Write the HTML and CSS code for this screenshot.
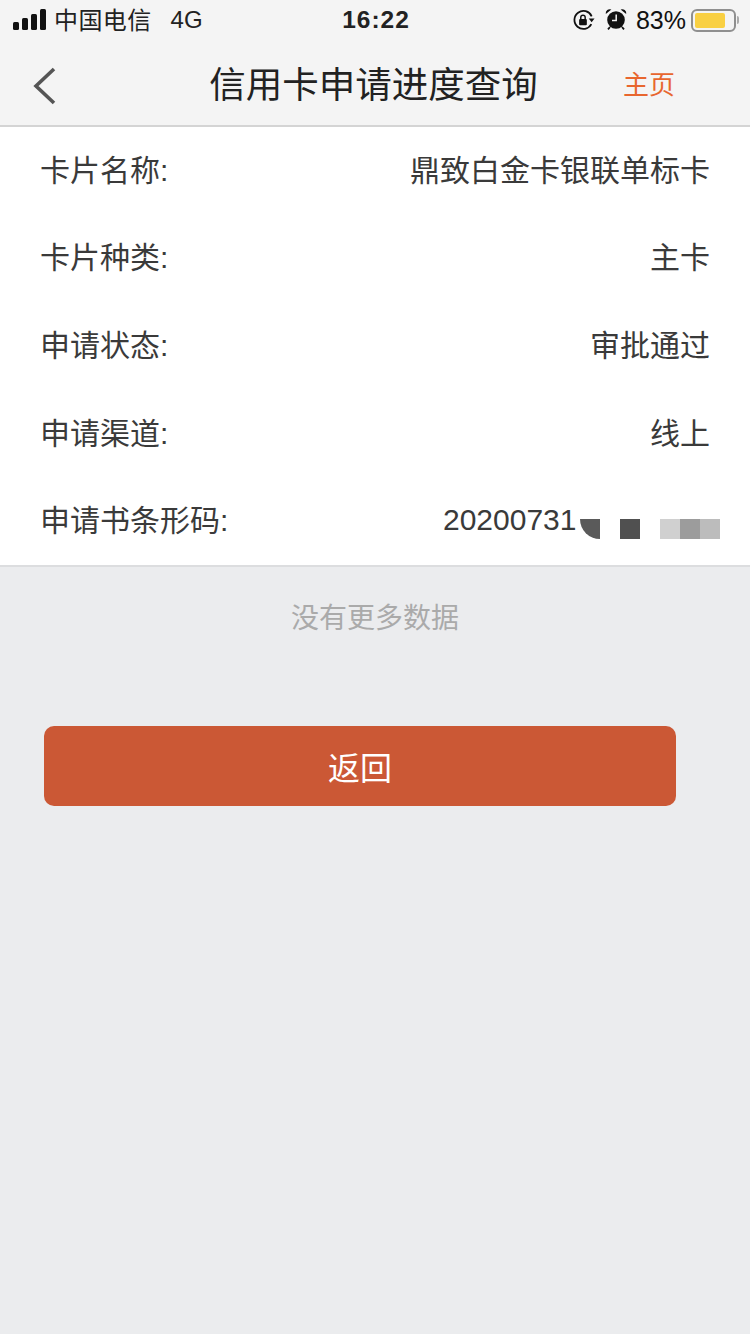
FILE: index.html
```html
<!DOCTYPE html>
<html lang="zh-CN">
<head>
  <meta charset="UTF-8">
  <title>信用卡申请进度查询</title>
  <link rel="stylesheet" href="styles.css">
</head>
<body>
  <div class="statusbar">
    <div class="status-left">
      <svg class="signal" width="34" height="22" viewBox="0 0 34 22">
        <rect x="0" y="13" width="6" height="8" rx="1.5"/>
        <rect x="9" y="9" width="6" height="12" rx="1.5"/>
        <rect x="18" y="5" width="6" height="16" rx="1.5"/>
        <rect x="27" y="0" width="6" height="21" rx="1.5"/>
      </svg>
      <span class="carrier">中国电信</span>
      <span class="network">4G</span>
    </div>
    <div class="clock">16:22</div>
    <div class="status-right">
      <!-- rotation lock -->
      <svg class="ico-lock" width="23" height="23" viewBox="0 0 22 22">
        <path d="M18.5 14.5A8.6 8.6 0 1 1 18.8 7" fill="none" stroke="#111" stroke-width="1.7"/>
        <path d="M16 9.2h5.6l-2.8 3.4z" fill="#111"/>
        <rect x="6.8" y="9.6" width="7.4" height="6" rx="1" fill="#111"/>
        <path d="M8.4 9.8V8a2.1 2.1 0 0 1 4.2 0v1.8" fill="none" stroke="#111" stroke-width="1.4"/>
      </svg>
      <!-- alarm clock -->
      <svg class="ico-alarm" width="22" height="24" viewBox="0 0 22 24">
        <circle cx="11" cy="13" r="8.8" fill="#111"/>
        <path d="M0.8 7a4 4 0 0 1 5.6-4.4zM21.2 7a4 4 0 0 0-5.6-4.4z" fill="#111"/>
        <path d="M5 20l-2 2.4M17 20l2 2.4" stroke="#111" stroke-width="1.8"/>
        <path d="M11.2 7.5v6H7" fill="none" stroke="#f3f3f3" stroke-width="1.5"/>
      </svg>
      <span class="percent">83%</span>
      <div class="battery">
        <div class="battery-level"></div>
      </div>
      <div class="battery-cap"></div>
    </div>
  </div>

  <div class="navbar">
    <svg class="back" width="26" height="40" viewBox="0 0 26 40">
      <path d="M23 3L5 20l18 17" fill="none" stroke="#555" stroke-width="3.6"/>
    </svg>
    <h1 class="title">信用卡申请进度查询</h1>
    <a class="home">主页</a>
  </div>

  <div class="list">
    <div class="row"><span>卡片名称:</span><span>鼎致白金卡银联单标卡</span></div>
    <div class="row"><span>卡片种类:</span><span>主卡</span></div>
    <div class="row"><span>申请状态:</span><span>审批通过</span></div>
    <div class="row"><span>申请渠道:</span><span>线上</span></div>
    <div class="row">
      <span>申请书条形码:</span>
      <span class="barcode">20200731
        <span class="mosaic">
          <i class="m-round"></i>
          <i class="m-dark"></i>
          <i class="m-light"></i>
          <i class="m-mid"></i>
          <i class="m-soft"></i>
        </span>
      </span>
    </div>
  </div>

  <p class="no-more">没有更多数据</p>

  <button class="back-btn">返回</button>
</body>
</html>
```

FILE: styles.css
```css
* {
  box-sizing: border-box;
}

html, body {
  height: 100%;
}

body {
  margin: 0;
  background: #ebecee;
  color: #333;
  font-family: "Liberation Sans", "Noto Sans CJK SC", sans-serif;
}

.statusbar {
  height: 40px;
  background: #f4f4f4;
  padding: 0 11px 0 13px;
  display: grid;
  grid-template-columns: 1fr auto 1fr;
  align-items: center;
  color: #111;
}

.status-left, .status-right {
  display: flex;
  align-items: center;
}

.status-right {
  justify-content: flex-end;
}

.signal {
  fill: #111;
  margin-right: 8px;
}

.carrier {
  font-size: 24px;
  letter-spacing: 0.4px;
  color: #222;
  margin-left: -1px;
  padding-bottom: 4px;
}

.network {
  font-size: 24px;
  margin-left: 19px;
  color: #222;
}

.clock {
  font-size: 24.5px;
  font-weight: bold;
  letter-spacing: 1px;
  color: #222;
}

.ico-lock {
  margin-right: 10px;
}

.ico-alarm {
  margin-right: 9px;
  margin-top: -3px;
}

.percent {
  font-size: 25px;
  margin-right: 5px;
}

.battery {
  width: 45px;
  height: 23px;
  border: 2px solid #8f8f8f;
  border-radius: 6px;
  padding: 2px;
}

.battery-level {
  width: 30px;
  height: 100%;
  background: #f9d043;
  border-radius: 2px;
}

.battery-cap {
  width: 2px;
  height: 8px;
  margin-left: 1px;
  background: #aaa;
  border-radius: 0 2px 2px 0;
}

.navbar {
  height: 87px;
  background: #f4f4f4;
  border-bottom: 2px solid #d4d4d4;
  display: flex;
  align-items: center;
  justify-content: space-between;
  padding: 0 75px 0 31px;
  position: relative;
}

.back {
  flex: none;
  margin-top: 6px;
}

.title {
  position: absolute;
  left: 0;
  right: 3px;
  margin: 0;
  text-align: center;
  font-size: 36.5px;
  font-weight: normal;
  color: #222;
}

.home {
  font-size: 26px;
  color: #e8662e;
}

.list {
  background: #fff;
  padding: 0 40px;
  border-bottom: 2px solid #dcdddf;
}

.row {
  height: 87.6px;
  padding-bottom: 6px;
  display: flex;
  align-items: center;
  justify-content: space-between;
  font-size: 30px;
  color: #3a3a3a;
}

.barcode {
  display: flex;
  align-items: center;
  width: 277px;
  margin-right: -10px;
  padding-top: 4px;
  white-space: nowrap;
}

.mosaic {
  display: flex;
  margin-left: 4px;
  margin-top: 18px;
}

.mosaic i {
  display: block;
  width: 20px;
  height: 20px;
}

.m-round {
  background: #5a5a5a;
  border-bottom-left-radius: 20px;
}

.m-dark {
  background: #505050;
  margin-left: 20px;
}

.m-light {
  background: #d0d0d0;
  margin-left: 20px;
}

.m-mid {
  background: #9c9c9c;
}

.m-soft {
  background: #bcbcbc;
}

.no-more {
  margin: 34px 0 0;
  text-align: center;
  font-size: 28px;
  line-height: 36px;
  color: #aaa;
}

.back-btn {
  display: block;
  width: 632px;
  height: 80px;
  margin: 89px 0 0 44px;
  background: #cb5835;
  border: none;
  border-radius: 10px;
  color: #fff;
  font-family: inherit;
  font-size: 32px;
}
```
